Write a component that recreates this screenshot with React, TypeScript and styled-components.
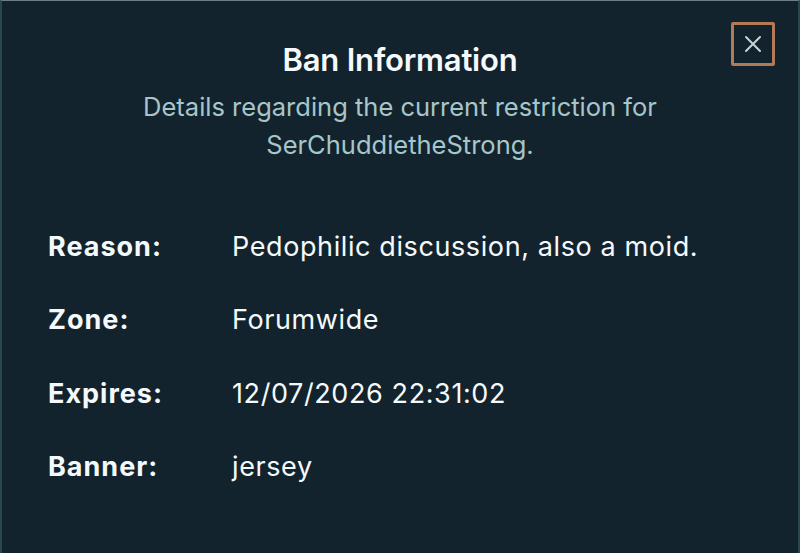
import React from "react";
import styled, { createGlobalStyle } from "styled-components";

const GlobalStyle = createGlobalStyle`
  html, body {
    margin: 0;
    padding: 0;
    background: #13232d;
  }
  #root {
    height: 553px;
  }
`;

interface BanEntry {
  label: string;
  value: string;
}

const entries: BanEntry[] = [
  { label: "Reason:", value: "Pedophilic discussion, also a moid." },
  { label: "Zone:", value: "Forumwide" },
  { label: "Expires:", value: "12/07/2026 22:31:02" },
  { label: "Banner:", value: "jersey" },
];

const App: React.FC = () => {
  return (
    <>
      <GlobalStyle />
      <Dialog>
        <CloseButton aria-label="Close">
          <svg width="20" height="20" viewBox="0 0 20 20" fill="none">
            <path
              d="M3 3 L17 17 M17 3 L3 17"
              stroke="#c9d3d6"
              strokeWidth="2"
              strokeLinecap="round"
            />
          </svg>
        </CloseButton>
        <Header>
          <Title>Ban Information</Title>
          <Subtitle>
            Details regarding the current restriction for
            <br />
            SerChuddietheStrong.
          </Subtitle>
        </Header>
        <Details>
          {entries.map(item => (
            <Row key={item.label}>
              <Label>{item.label}</Label>
              <Value>{item.value}</Value>
            </Row>
          ))}
        </Details>
      </Dialog>
    </>
  );
};

const Dialog = styled.div`
  position: relative;
  box-sizing: border-box;
  width: 800px;
  height: 553px;
  background: #13232d;
  border-left: 2px solid #2b474e;
  border-right: 2px solid #2b474e;
  border-top: 1px solid #6d7f86;
  padding: 39px 46px 0 46px;
  font-family: Inter, "Open Sans", sans-serif;
  color: #f2f7f8;
`;

const CloseButton = styled.button`
  position: absolute;
  top: 21px;
  right: 23px;
  width: 44px;
  height: 44px;
  box-sizing: border-box;
  border: 3px solid #b47a58;
  border-radius: 2px;
  background: transparent;
  display: flex;
  align-items: center;
  justify-content: center;
  padding: 0;
  cursor: pointer;
`;

const Header = styled.div`
  display: flex;
  flex-direction: column;
  align-items: center;
  text-align: center;
`;

const Title = styled.h2`
  margin: 0;
  font-size: 31px;
  font-weight: 600;
  line-height: 40px;
  letter-spacing: -0.2px;
  color: #f4fafb;
`;

const Subtitle = styled.p`
  margin: 8px 0 0 0;
  font-size: 25.5px;
  font-weight: 400;
  line-height: 38px;
  color: #a6c6ca;
`;

const Details = styled.div`
  margin-top: 66px;
  display: flex;
  flex-direction: column;
  gap: 39.3px;
`;

const Row = styled.div`
  display: grid;
  grid-template-columns: 184px 1fr;
  align-items: center;
  line-height: 34px;
`;

const Label = styled.span`
  font-size: 27px;
  font-weight: 700;
  letter-spacing: 1px;
  color: #f4fafb;
`;

const Value = styled.span`
  font-size: 27px;
  font-weight: 400;
  letter-spacing: 0.6px;
  color: #f4fafb;
`;

export default App;
